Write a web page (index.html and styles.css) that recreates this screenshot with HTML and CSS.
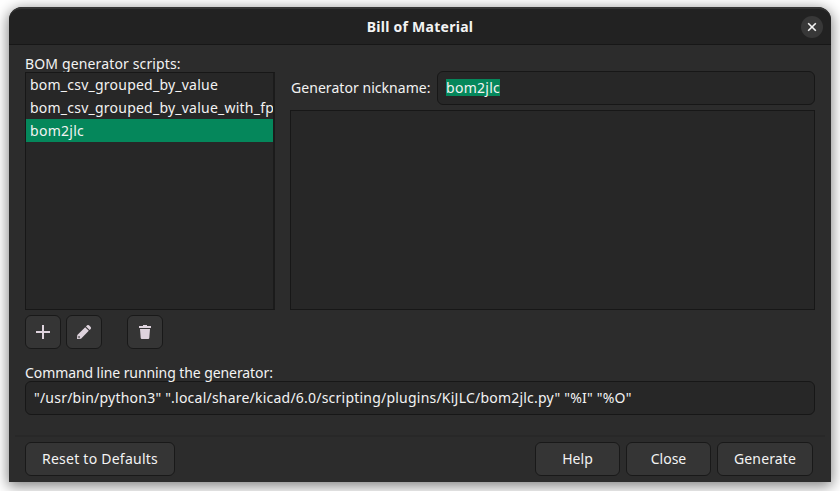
FILE: index.html
```html
<!DOCTYPE html>
<html lang="en">
<head>
<meta charset="utf-8">
<title>Bill of Material</title>
<link rel="stylesheet" href="styles.css">
</head>
<body>
<main class="window">
  <header class="titlebar">
    <h1 class="title">Bill of Material</h1>
    <button class="window-close" aria-label="Close window"><svg width="10" height="10" viewBox="0 0 10 10"><path d="M1.2 1.2l7.6 7.6M8.8 1.2L1.2 8.8" stroke="#f4f4f4" stroke-width="1.6"/></svg></button>
  </header>
  <div class="content">
    <div class="columns">
      <section class="scripts">
        <div class="label"><span class="t-scripts">BOM generator scripts:</span></div>
        <ul class="list">
          <li><span class="t-item">bom_csv_grouped_by_value</span></li>
          <li><span class="t-item">bom_csv_grouped_by_value_with_fp</span></li>
          <li class="selected"><span class="t-bom">bom2jlc</span></li>
        </ul>
      </section>
      <section class="details">
        <div class="nickname">
          <span class="t-nick">Generator nickname:</span>
          <div class="entry"><span class="selection t-bom">bom2jlc</span></div>
        </div>
        <div class="info"></div>
      </section>
    </div>
    <div class="tools">
      <button class="button icon" aria-label="Add"><svg width="16" height="16" viewBox="0 0 16 16"><path d="M7 1h2v6h6v2H9v6H7V9H1V7h6z" fill="#ded3dd"/></svg></button>
      <button class="button icon" aria-label="Edit"><svg width="16" height="16" viewBox="0 0 16 16"><path fill-rule="evenodd" d="M1 15l.3-4L9.2 3.200 12.800 6.800 5 14.700zM2.300 12.200v1.500h1.500v-1.500zM10 2.400l1.100-1.100Q12 .5 13 1.300l1.700 1.700Q15.500 4 14.700 4.900L13.600 6z" fill="#ded3dd"/></svg></button>
      <button class="button icon delete" aria-label="Delete"><svg width="16" height="16" viewBox="0 0 16 16"><path d="M2 2h4V1h4v1h4v2H2zM3 5h10l-.7 9Q12.200 15 11.200 15H4.800q-1 0-1.100-1z" fill="#ded3dd"/></svg></button>
    </div>
    <div class="label command-label"><span class="t-cmdlabel">Command line running the generator:</span></div>
    <div class="entry command"><span class="t-cmd">"/usr/bin/python3" ".local/share/kicad/6.0/scripting/plugins/KiJLC/bom2jlc.py" "%I" "%O"</span></div>
  </div>
  <footer class="actions">
    <button class="button reset"><span class="t-reset">Reset to Defaults</span></button>
    <button class="button help">Help</button>
    <button class="button close">Close</button>
    <button class="button generate"><span class="t-generate">Generate</span></button>
  </footer>
</main>
</body>
</html>
```
FILE: styles.css
```css
* { box-sizing: border-box; }
body {
  margin: 0;
  height: 491px;
  padding: 7px 9px 9px;
  overflow: hidden;
  background: #fff;
  color: #f3f3f3;
  font: 14px/20px "Noto Sans", sans-serif;
}
button { font: inherit; color: inherit; padding: 0; }
svg { display: block; }
span { white-space: pre; }
.t-scripts { letter-spacing: .14px; }
.t-item { letter-spacing: .23px; }
.t-bom { letter-spacing: .28px; }
.t-nick { letter-spacing: .05px; }
.t-cmdlabel { letter-spacing: -.08px; }
.t-cmd { letter-spacing: .22px; }
.t-reset { letter-spacing: .24px; }
.t-generate { letter-spacing: .12px; }
.window {
  height: 475px;
  display: flex;
  flex-direction: column;
  background: #2c2c2c;
  border-radius: 13px 13px 0 0;
  box-shadow: 0 3px 14px 1px rgba(0, 0, 0, .5);
}
.titlebar {
  height: 38px;
  flex: none;
  display: grid;
  grid-template-columns: 1fr auto 1fr;
  align-items: center;
  padding: 0 8px 0 8px;
  background: #222;
  border-top: 2px solid #343434;
  border-bottom: 1px solid #171717;
  border-radius: 13px 13px 0 0;
}
.title {
  grid-column: 2;
  margin: 0;
  font-size: 14px;
  font-weight: 700;
  line-height: 20px;
  letter-spacing: .27px;
}
.window-close {
  justify-self: end;
  width: 22px;
  height: 22px;
  display: grid;
  place-items: center;
  border: 0;
  border-radius: 50%;
  background: #383838;
}
.content { padding: 9px 16px 0; height: 390px; flex: none; }
.columns { display: flex; gap: 15px; height: 256px; }
.scripts { width: 250px; display: flex; flex-direction: column; }
.label { height: 18px; line-height: 20px; }
.list {
  list-style: none;
  margin: 0;
  padding: 0;
  flex: 1;
  background: #272727;
  border: 1px solid #171717;
  border-right: 2px solid #1b1b1b;
  overflow: hidden;
}
.list li { height: 23px; line-height: 23px; padding-left: 4px; }
.list .selected { background: #05875b; }
.details { flex: 1; display: flex; flex-direction: column; padding-top: 17px; }
.nickname {
  height: 34px;
  margin-bottom: 5px;
  padding-left: 1px;
  display: flex;
  align-items: center;
  justify-content: space-between;
}
.entry {
  height: 34px;
  display: flex;
  align-items: center;
  padding: 0 8px;
  background: #272727;
  border: 1px solid #171717;
  border-radius: 6px;
}
.nickname .entry { width: 378px; padding-bottom: 1px; }
.selection { background: #05875b; line-height: 17px; }
.info { flex: 1; background: #272727; border: 1px solid #171717; }
.tools { display: flex; gap: 5px; margin-top: 5px; }
.button {
  height: 34px;
  display: grid;
  place-items: center;
  background: #353535;
  border: 1px solid #191919;
  border-radius: 6px;
}
.icon { width: 36px; }
.delete { margin-left: 20px; }
.command-label { margin-top: 14px; }
.actions {
  height: 47px;
  flex: none;
  margin: 0 6px;
  padding: 5px 12px 0 10px;
  display: flex;
  gap: 6px;
  border-top: 2px solid #282828;
}
.reset { width: 150px; margin-right: auto; }
.help, .close { width: 85px; }
.generate { width: 96px; }
```
